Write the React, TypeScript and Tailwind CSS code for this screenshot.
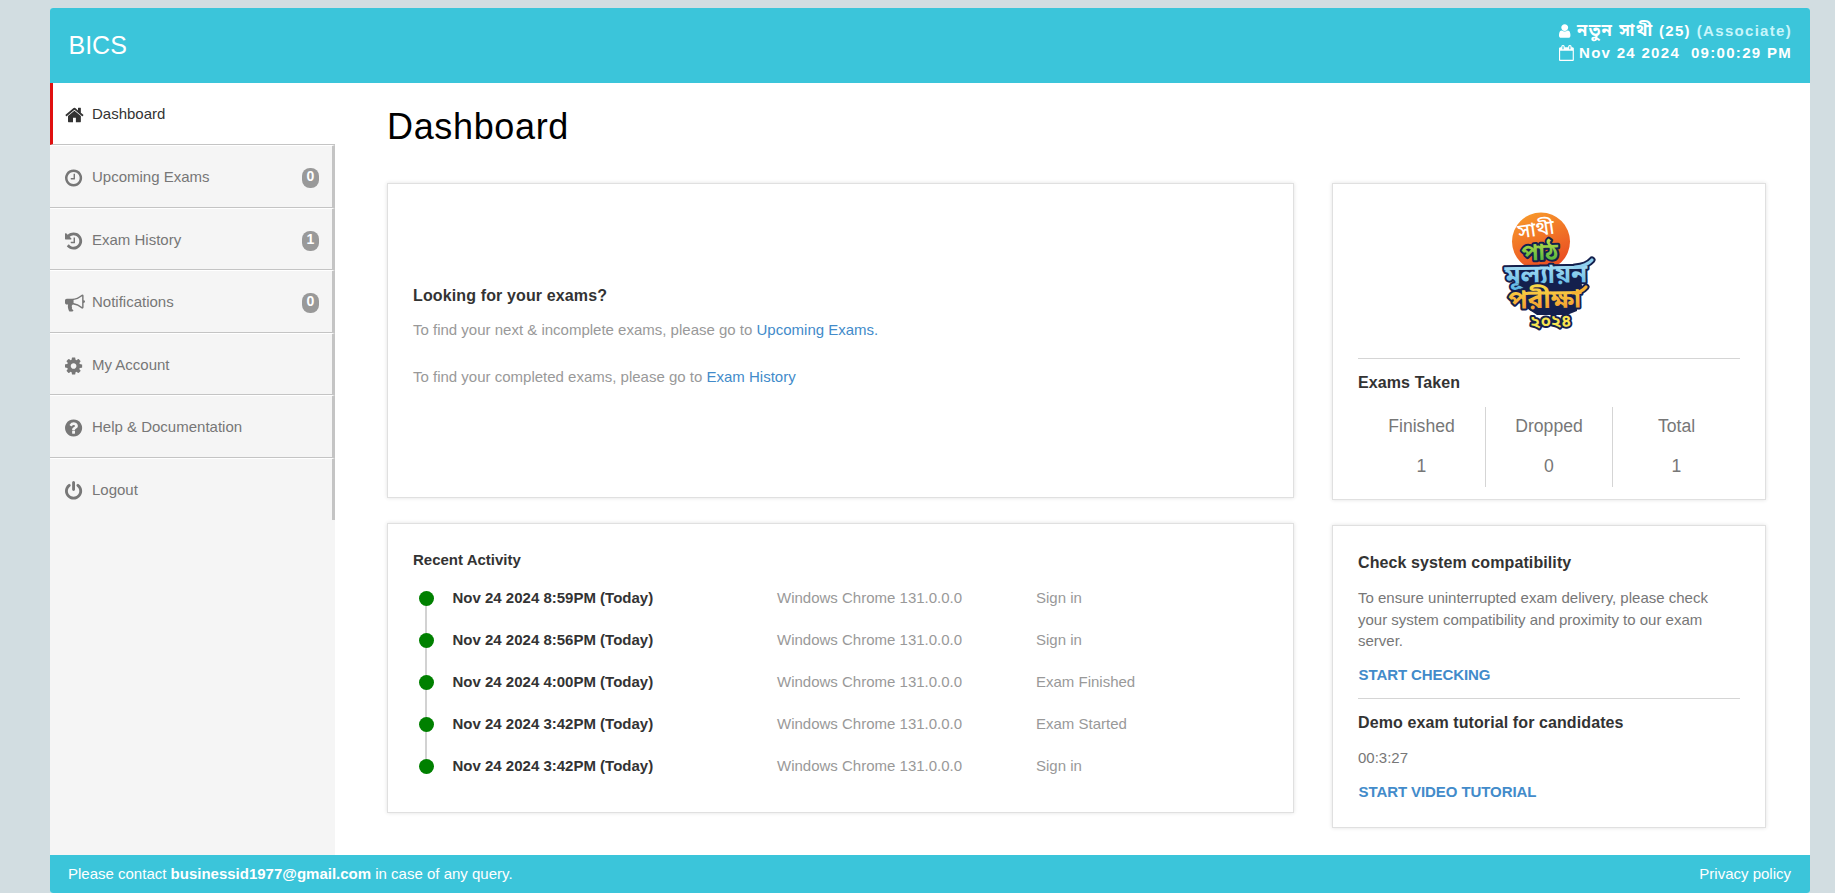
import type { ReactNode } from "react";

const bengali = "font-['Liberation_Sans','Noto_Sans_Bengali','Lohit_Bengali','Mukti','FreeSans',sans-serif]";

function Icon({ d, x, size = 20, className = "" }: { d: string; x: number; size?: number; className?: string }) {
  return (
    <svg width={size} height={size} viewBox={`${x} 0 1792 1792`} fill="currentColor" overflow="visible" className={`shrink-0 ${className}`}>
      <path d={d} />
    </svg>
  );
}

const icons = {
  home: "M1472 992v480q0 26-19 45t-45 19h-384v-384h-256v384h-384q-26 0-45-19t-19-45v-480q0-1 .5-3t.5-3l575-474 575 474q1 2 1 6zm223-69l-62 74q-8 9-21 11h-3q-13 0-21-7l-692-577-692 577q-12 8-24 7-13-2-21-11l-62-74q-8-10-7-23.5t11-21.5l719-599q32-26 76-26t76 26l244 204v-195q0-14 9-23t23-9h192q14 0 23 9t9 23v408l219 182q10 8 11 21.5t-7 23.5z",
  clock: "M1024 544v448q0 14-9 23t-23 9h-320q-14 0-23-9t-9-23v-64q0-14 9-23t23-9h224v-352q0-14 9-23t23-9h64q14 0 23 9t9 23zm416 352q0-148-73-273t-198-198-273-73-273 73-198 198-73 273 73 273 198 198 273 73 273-73 198-198 73-273zm224 0q0 209-103 385.5t-279.5 279.5-385.5 103-385.5-103-279.5-279.5-103-385.5 103-385.5 279.5-279.5 385.5-103 385.5 103 279.5 279.5 103 385.5z",
  history: "M1664 896q0 156-61 298t-164 245-245 164-298 61q-172 0-327-72.5t-264-204.5q-7-10-6.5-22.5t8.5-20.5l137-138q10-9 25-9 16 2 23 12 73 95 179 147t225 52q104 0 198.5-40.5t163.5-109.5 109.5-163.5 40.5-198.5-40.5-198.5-109.5-163.5-163.5-109.5-198.5-40.5q-98 0-188 35.5t-160 101.5l137 138q31 30 14 69-17 40-59 40h-448q-26 0-45-19t-19-45v-448q0-42 40-59 39-17 69 14l130 129q107-101 244.5-156.5t284.5-55.5q156 0 298 61t245 164 164 245 61 298zm-640-288v448q0 14-9 23t-23 9h-320q-14 0-23-9t-9-23v-64q0-14 9-23t23-9h224v-352q0-14 9-23t23-9h64q14 0 23 9t9 23z",
  bullhorn: "M1664 640q53 0 90.5 37.5t37.5 90.5-37.5 90.5-90.5 37.5v384q0 52-38 90t-90 38q-417-347-812-380-58 19-91 66t-31 100.5 40 92.5q-20 33-23 65.5t6 58 33.5 55 48 50 61.5 50.5q-29 58-111.5 83t-168.5 11.5-132-55.5q-7-23-29.5-87.5t-32-94.5-23-89-15-101 3.5-98.5 22-110.5h-122q-66 0-113-47t-47-113v-192q0-66 47-113t113-47h480q435 0 896-384 52 0 90 38t38 90v384zm-128 604v-954q-394 302-768 343v270q377 42 768 341z",
  cog: "M1152 896q0-106-75-181t-181-75-181 75-75 181 75 181 181 75 181-75 75-181zm512-109v222q0 12-8 23t-20 13l-185 28q-19 54-39 91 35 50 107 138 10 12 10 25t-9 23q-27 37-99 108t-94 71q-12 0-26-9l-138-108q-44 23-91 38-16 136-29 186-7 28-36 28h-222q-14 0-24.5-8.5t-11.5-21.5l-28-184q-49-16-90-37l-141 107q-10 9-25 9-14 0-25-11-126-114-165-168-7-10-7-23 0-12 8-23 15-21 51-66.5t54-70.5q-27-50-41-99l-183-27q-13-2-21-12.5t-8-23.5v-222q0-12 8-23t19-13l186-28q14-46 39-92-40-57-107-138-10-12-10-24 0-10 9-23 26-36 98.5-107.5t94.5-71.5q13 0 26 10l138 107q44-23 91-38 16-136 29-186 7-28 36-28h222q14 0 24.5 8.5t11.5 21.5l28 184q49 16 90 37l142-107q9-9 24-9 13 0 25 10 129 119 165 170 7 8 7 22 0 12-8 23-15 21-51 66.5t-54 70.5q26 50 41 98l183 28q13 2 21 12.5t8 23.5z",
  help: "M1024 1376v-192q0-14-9-23t-23-9h-192q-14 0-23 9t-9 23v192q0 14 9 23t23 9h192q14 0 23-9t9-23zm256-672q0-88-55.5-163t-138.5-116-170-41q-243 0-371 213-15 24 8 42l132 100q7 6 19 6 16 0 25-12 53-68 86-92 34-24 86-24 48 0 85.5 26t37.5 59q0 38-20 61t-68 45q-63 28-115.5 86.5t-52.5 125.5v36q0 14 9 23t23 9h192q14 0 23-9t9-23q0-19 21.5-49.5t54.5-49.5q32-18 49-28.5t46-35 44.5-48 28-60.5 12.5-81zm384 192q0 209-103 385.5t-279.5 279.5-385.5 103-385.5-103-279.5-279.5-103-385.5 103-385.5 279.5-279.5 385.5-103 385.5 103 279.5 279.5 103 385.5z",
  power: "M1664 896q0 156-61 298t-164 245-245 164-298 61-298-61-245-164-164-245-61-298q0-182 80.5-343t226.5-270q43-32 95.5-25t83.5 50q32 42 24.5 94.5t-49.5 84.5q-98 74-151.5 181t-53.5 228q0 104 40.5 198.5t109.5 163.5 163.5 109.5 198.5 40.5 198.5-40.5 163.5-109.5 109.5-163.5 40.5-198.5q0-121-53.5-228t-151.5-181q-42-32-49.5-84.5t24.5-94.5q31-43 84-50t95 25q146 109 226.5 270t80.5 343zm-640-768v640q0 52-38 90t-90 38-90-38-38-90v-640q0-52 38-90t90-38 90 38 38 90z",
  user: "M1536 1399q0 109-62.5 187t-150.5 78h-854q-88 0-150.5-78t-62.5-187q0-85 8.5-160.5t31.5-152 58.5-131 94-89 134.5-34.5q131 128 313 128t313-128q76 0 134.5 34.5t94 89 58.5 131 31.5 152 8.5 160.5zm-256-887q0 159-112.5 271.5t-271.5 112.5-271.5-112.5-112.5-271.5 112.5-271.5 271.5-112.5 271.5 112.5 112.5 271.5z",
  calendar: "M192 1664h1408v-1024h-1408v1024zm384-1216v-288q0-14-9-23t-23-9h-64q-14 0-23 9t-9 23v288q0 14 9 23t23 9h64q14 0 23-9t9-23zm768 0v-288q0-14-9-23t-23-9h-64q-14 0-23 9t-9 23v288q0 14 9 23t23 9h64q14 0 23-9t9-23zm384-64v1280q0 52-38 90t-90 38h-1408q-52 0-90-38t-38-90v-1280q0-52 38-90t90-38h128v-96q0-66 47-113t113-47h64q66 0 113 47t47 113v96h384v-96q0-66 47-113t113-47h64q66 0 113 47t47 113v96h128q52 0 90 38t38 90z",
};

const menu = [
  { label: "Upcoming Exams", icon: icons.clock, x: 128, badge: 0, box: "h-[63px]" },
  { label: "Exam History", icon: icons.history, x: 128, badge: 1, box: "h-[62px] pt-px" },
  { label: "Notifications", icon: icons.bullhorn, x: 0, badge: 0, box: "h-[63px]" },
  { label: "My Account", icon: icons.cog, x: 128, box: "h-[62px] pt-px" },
  { label: "Help & Documentation", icon: icons.help, x: 128, box: "h-[63px]" },
  { label: "Logout", icon: icons.power, x: 128, box: "h-[62px]" },
];

const activity = [
  ["Nov 24 2024 8:59PM (Today)", "Sign in"],
  ["Nov 24 2024 8:56PM (Today)", "Sign in"],
  ["Nov 24 2024 4:00PM (Today)", "Exam Finished"],
  ["Nov 24 2024 3:42PM (Today)", "Exam Started"],
  ["Nov 24 2024 3:42PM (Today)", "Sign in"],
];

const stats = [
  ["Finished", "1"],
  ["Dropped", "0"],
  ["Total", "1"],
];

function Card({ className = "", children }: { className?: string; children: ReactNode }) {
  return (
    <section className={`border border-[#e0e0e0] bg-white px-[25px] shadow-[0_0_4px_rgba(0,0,0,0.12)] ${className}`}>
      {children}
    </section>
  );
}

function Logo() {
  return (
    <svg width="140" height="150" viewBox="0 0 140 150" className={`font-bold ${bengali}`}>
      <defs>
        <linearGradient id="sun" x1="0" y1="0" x2="0.4" y2="1">
          <stop offset="0" stopColor="#f9a02c" />
          <stop offset="1" stopColor="#ea4f22" />
        </linearGradient>
        <linearGradient id="leaf" x1="0" y1="0" x2="0" y2="1">
          <stop offset="0" stopColor="#c5e04a" />
          <stop offset="1" stopColor="#3fae3c" />
        </linearGradient>
        <linearGradient id="sky" x1="0" y1="0" x2="0" y2="1">
          <stop offset="0" stopColor="#b9e6f7" />
          <stop offset="1" stopColor="#56b4e4" />
        </linearGradient>
        <linearGradient id="gold" x1="0" y1="0" x2="0" y2="1">
          <stop offset="0" stopColor="#fbe04a" />
          <stop offset="1" stopColor="#f0902a" />
        </linearGradient>
      </defs>
      <circle cx="62" cy="46.5" r="29" fill="url(#sun)" />
      <path d="M42 74L100 72L104 97Q98 100 98 116L88 120H58L40 108L36 92Z" fill="#14204d" />
      <g fill="none" strokeLinecap="round" strokeLinejoin="round">
        <path d="M96 72Q108 71 113 65" stroke="#14204d" strokeWidth="7" />
        <path d="M92 98Q102 98 107 92" stroke="#14204d" strokeWidth="7" />
      </g>
      <g stroke="#14204d" strokeWidth="4" strokeLinejoin="round" className="[paint-order:stroke]" textAnchor="middle">
        <text x="58" y="41" fontSize="20" fill="#fff" stroke="none" fontWeight="500" transform="rotate(-8 58 41)">সাথী</text>
        <text x="61" y="65" fontSize="23" fill="url(#leaf)" transform="rotate(-2 61 65)">পাঠ</text>
        <text x="67" y="88" fontSize="26" fill="url(#sky)" transform="rotate(-1 67 88)">মূল্যায়ন</text>
        <text x="66" y="113" fontSize="26" fill="url(#gold)" transform="rotate(-1 66 113)">পরীক্ষা</text>
        <text x="72" y="132" fontSize="17" fill="#f8e34f" transform="rotate(-2 72 132)">২০২৪</text>
      </g>
      <g fill="none" strokeLinecap="round">
        <path d="M96 72Q108 71 113 65" stroke="#8fd0ef" strokeWidth="3.2" />
        <path d="M94 98Q102 98 107 92" stroke="#f6b233" strokeWidth="3.2" />
      </g>
    </svg>
  );
}

export default function App() {
  return (
    <div className="h-[893px] bg-[#d2dde1] pl-[50px] pr-[25px] pt-2 font-['Liberation_Sans',Arial,sans-serif] text-[15px] leading-[21.43px] text-[#777]">
      <div className="flex h-[885px] flex-col overflow-hidden rounded-[3px] bg-white">
        <header className="flex h-[75px] shrink-0 justify-between bg-[#3bc5da] pl-[18px] pr-[19px] text-white">
          <div className="pl-[0.5px] pt-[24px] text-[25px] leading-[26px]">BICS</div>
          <div className="flex flex-col pt-[12px] font-bold leading-[22px] tracking-[1.3px]">
            <div className="flex h-[22px] items-center">
              <Icon d={icons.user} x={256} size={16} />
              <span className={`ml-[2px] w-[82px] whitespace-nowrap text-[16.6px] ${bengali}`}>নতুন সাথী</span>
              <span>(25)&nbsp;</span>
              <span className="-mr-px ml-auto text-[#c8f5fb]">(Associate)</span>
            </div>
            <div className="flex h-[22px] items-center">
              <Icon d={icons.calendar} x={64} size={16} />
              <span className="-mr-px ml-1 whitespace-pre">Nov 24 2024  09:00:29 PM</span>
            </div>
          </div>
        </header>

        <div className="flex min-h-0 flex-1">
          <nav className="w-[285px] shrink-0 bg-[#f5f5f5]">
            <div className="flex h-[62px] items-center border-b border-l-[3px] border-b-[#c4c4c4] border-l-[#e01010] bg-white pl-[12px] text-[#333]">
              <Icon d={icons.home} x={50} className="mt-[2px]" />
              <span className="ml-[7px]">Dashboard</span>
            </div>
            {menu.map((m, i) => (
              <div
                key={m.label}
                className={`flex items-center border-r-[3px] border-t border-r-[#c4c4c4] border-t-white pl-[15px] pr-[13px] ${m.box} ${i < 5 ? "border-b border-b-[#c4c4c4]" : ""}`}
              >
                <Icon d={m.icon} x={m.x} className="mt-[2px]" />
                <span className="ml-[7px]">{m.label}</span>
                {m.badge !== undefined && (
                  <span className="ml-auto mt-[2px] h-5 w-[17px] rounded-[8px] bg-[#999] pt-px text-center text-[14px] font-bold leading-[15px] text-white">
                    {m.badge}
                  </span>
                )}
              </div>
            ))}
          </nav>

          <main className="min-w-0 flex-1 pl-[52px] pr-[44px]">
            <h1 className="pt-[21px] text-[36px] leading-[46px] tracking-[0.65px] text-black">Dashboard</h1>
            <div className="mt-[33px] flex items-start justify-between">
              <div className="flex w-[907px] flex-col gap-[25px]">
                <Card className="flex h-[315px] flex-col pt-[101px] text-[#999]">
                  <h2 className="text-[16px] font-bold leading-[22px] tracking-[0.13px] text-[#333]">Looking for your exams?</h2>
                  <p className="mt-3">
                    To find your next &amp; incomplete exams, please go to <a className="text-[#428bca]">Upcoming Exams.</a>
                  </p>
                  <p className="mt-[26px]">
                    To find your completed exams, please go to <a className="text-[#428bca]">Exam History</a>
                  </p>
                </Card>
                <Card className="h-[290px] pt-[25px]">
                  <h3 className="font-bold text-[#333]">Recent Activity</h3>
                  <ul className="mt-[7px]">
                    {activity.map(([when, what], i) => (
                      <li key={i} className="flex h-[42px] items-center text-[#999]">
                        <span className="relative ml-[6px] flex h-full w-[15px] items-center">
                          {i < 4 && <span className="absolute left-[6px] top-[21px] h-[42px] w-[2px] bg-[#d2d2d2]" />}
                          <span className="relative size-[15px] rounded-full bg-[#008000]" />
                        </span>
                        <span className="mb-[2px] ml-[18.5px] w-[324.5px] font-bold text-[#333]">{when}</span>
                        <span className="mb-[2px] w-[259px]">Windows Chrome 131.0.0.0</span>
                        <span className="mb-[2px]">{what}</span>
                      </li>
                    ))}
                  </ul>
                </Card>
              </div>

              <div className="flex w-[434px] flex-col gap-[25px]">
                <Card className="h-[317px] pt-[11px]">
                  <div className="flex justify-center border-b border-[#d5d5d5] pb-[13px]">
                    <Logo />
                  </div>
                  <h2 className="mt-[13px] text-[16px] font-bold leading-[22px] tracking-[0.1px] text-[#333]">Exams Taken</h2>
                  <div className="mt-[13px] grid h-[80px] grid-cols-[128px_127px_127px] divide-x divide-[#d5d5d5] text-center text-[17.6px]">
                    {stats.map(([k, v]) => (
                      <div key={k} className="pt-[9px]">
                        <div>{k}</div>
                        <div className="mt-[18.5px]">{v}</div>
                      </div>
                    ))}
                  </div>
                </Card>
                <Card className="h-[303px] pt-[26px]">
                  <h2 className="text-[16px] font-bold leading-[22px] tracking-[0.1px] text-[#333]">Check system compatibility</h2>
                  <p className="mt-[13.4px]">
                    To ensure uninterrupted exam delivery, please check
                    <br />
                    your system compatibility and proximity to our exam
                    <br />
                    server.
                  </p>
                  <a className="ml-[0.5px] mt-[12px] block font-bold tracking-[-0.08px] text-[#428bca]">START CHECKING</a>
                  <div className="mt-[13px] border-t border-[#d5d5d5]" />
                  <h2 className="mt-[13px] text-[16px] font-bold leading-[22px] tracking-[0.1px] text-[#333]">
                    Demo exam tutorial for candidates
                  </h2>
                  <p className="mt-[12.5px]">00:3:27</p>
                  <a className="ml-[0.5px] mt-[12.5px] block font-bold tracking-[-0.08px] text-[#428bca]">START VIDEO TUTORIAL</a>
                </Card>
              </div>
            </div>
          </main>
        </div>

        <footer className="flex h-[38px] shrink-0 items-center justify-between bg-[#3bc5da] pl-[18px] pr-[19px] text-white">
          <span>
            Please contact <b>businessid1977@gmail.com</b> in case of any query.
          </span>
          <a>Privacy policy</a>
        </footer>
      </div>
    </div>
  );
}
